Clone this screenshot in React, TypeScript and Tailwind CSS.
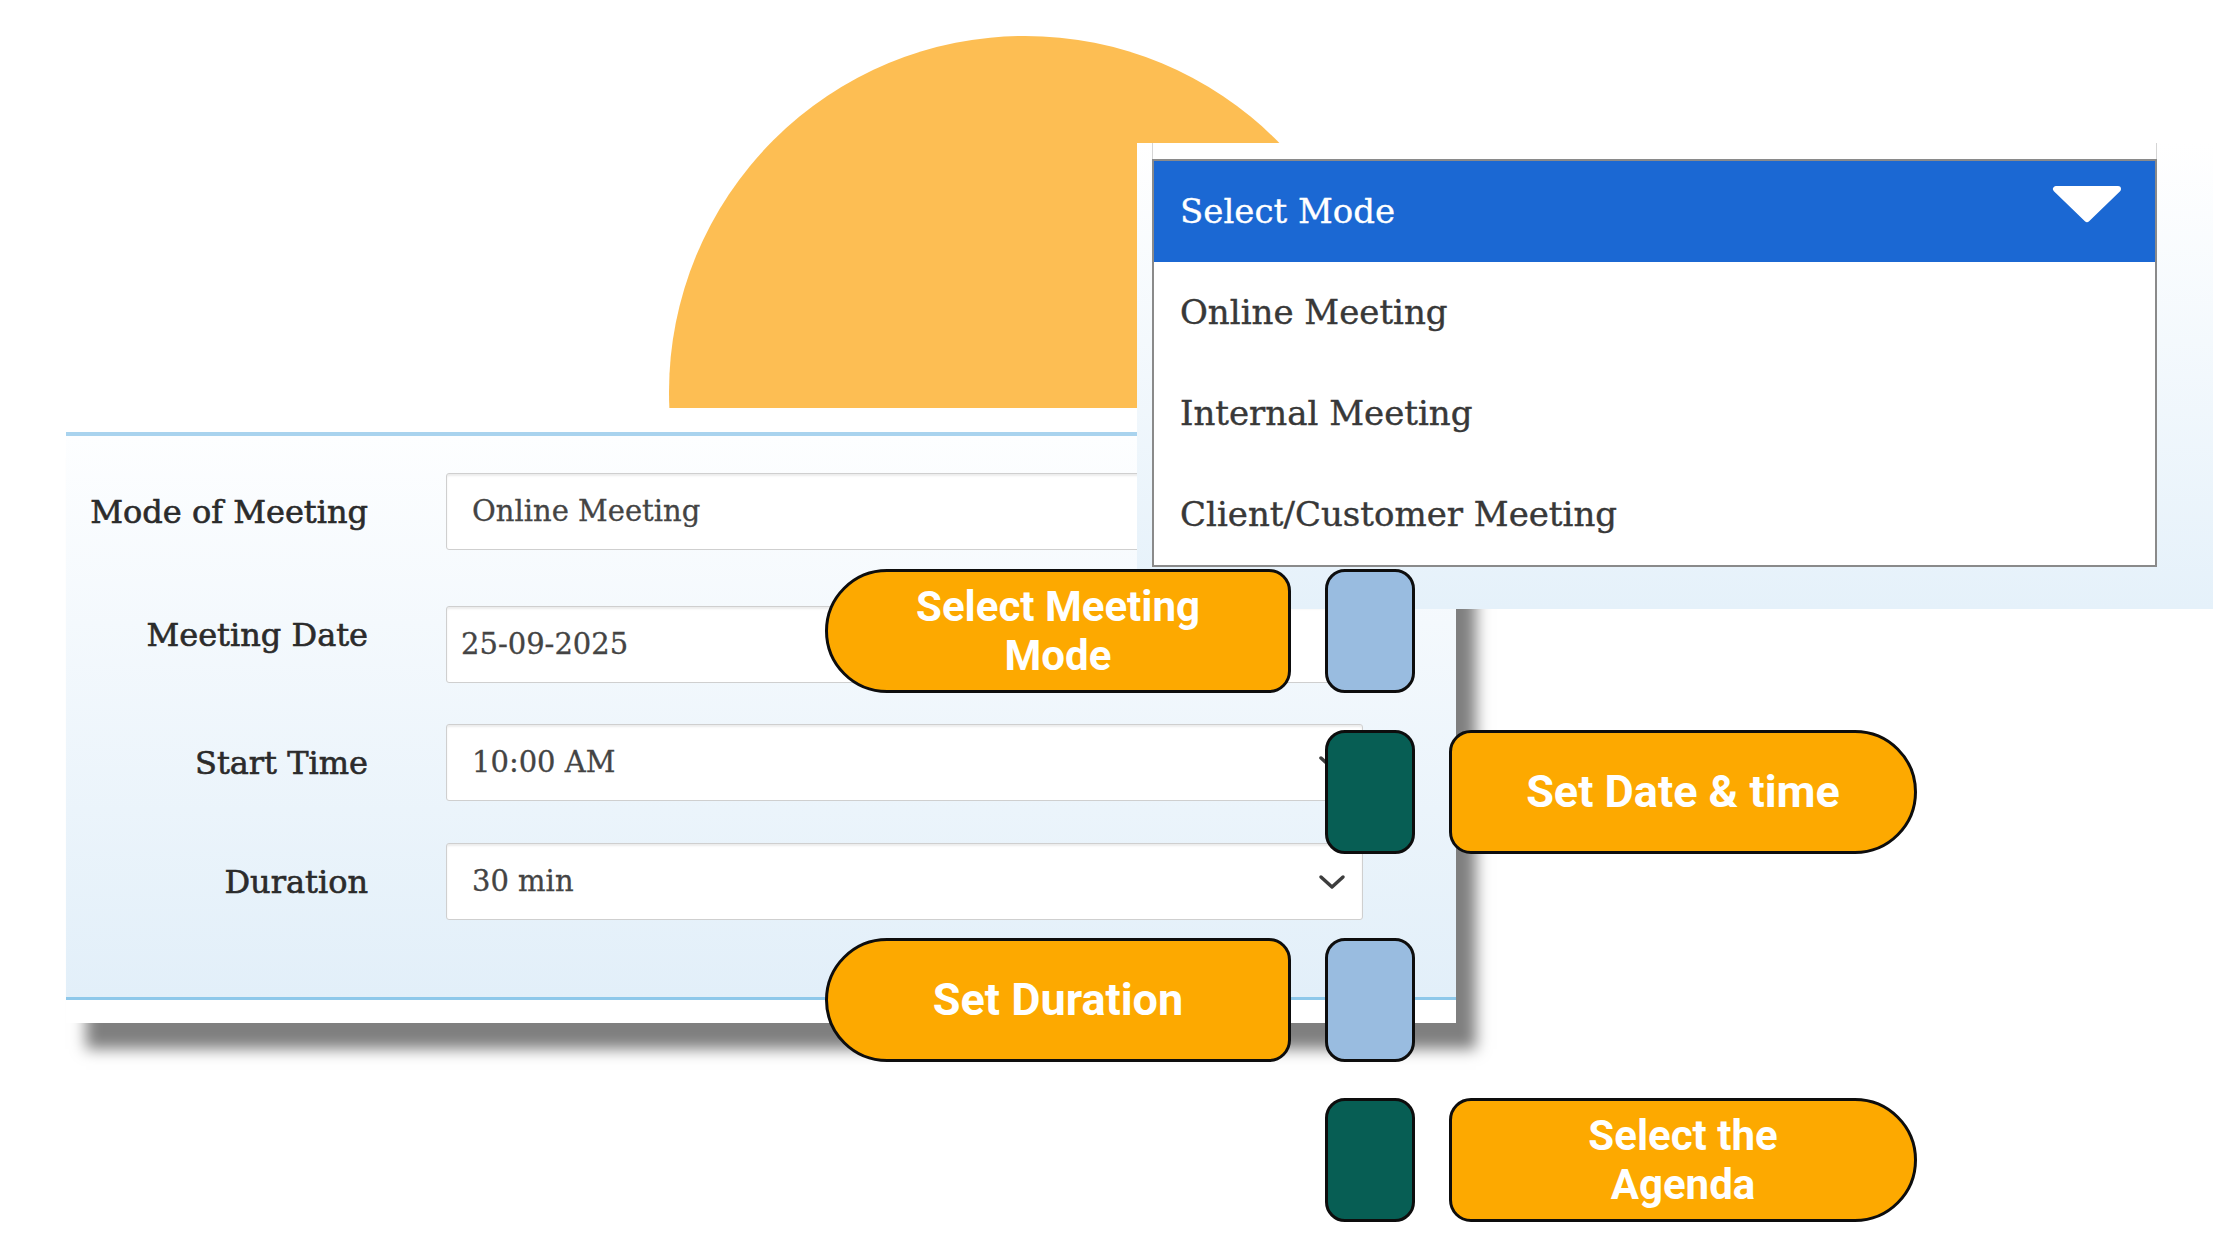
import React from "react"

const serif = "font-['DejaVu_Serif',serif]"
const sans = "font-['Roboto','Liberation_Sans',sans-serif]"

const fields = [
  { label: "Mode of Meeting", value: "Online Meeting", pad: "pl-[25px]", gap: "", labelShift: "", chevron: false },
  { label: "Meeting Date", value: "25-09-2025", pad: "pl-[14px]", gap: "mt-[56px]", labelShift: "-translate-y-[10px]", chevron: false },
  { label: "Start Time", value: "10:00 AM", pad: "pl-[25px]", gap: "mt-[41px]", labelShift: "", chevron: true },
  { label: "Duration", value: "30 min", pad: "pl-[25px]", gap: "mt-[42px]", labelShift: "", chevron: true },
]

const modes = ["Online Meeting", "Internal Meeting", "Client/Customer Meeting"]

const Chevron = () => (
  <svg width="28" height="16" viewBox="0 0 28 16" className="shrink-0">
    <polyline points="3,3 14,13 25,3" fill="none" stroke="#3d3d3d" strokeWidth="3.5" strokeLinecap="round" strokeLinejoin="round" />
  </svg>
)

const Square = ({ dark }: { dark?: boolean }) => (
  <div
    className={`h-[124px] w-[90px] shrink-0 rounded-[20px] border-[3px] border-[#0d0d0d] ${
      dark ? "bg-[#075e54]" : "bg-[#99bce0]"
    }`}
  />
)

const Pill = ({ side, lines }: { side: "left" | "right"; lines: string[] }) => (
  <div
    className={`flex h-[124px] shrink-0 flex-col items-center justify-center border-[3px] border-[#0d0d0d] bg-[#fda900] text-center font-bold text-white ${sans} ${
      lines.length > 1 ? "text-[42px] leading-[49px]" : "text-[45px] leading-[52px]"
    } ${side === "left" ? "w-[466px] rounded-l-[62px] rounded-r-[22px]" : "w-[468px] rounded-l-[22px] rounded-r-[62px]"}`}
  >
    {lines.map((l) => (
      <span key={l}>{l}</span>
    ))}
  </div>
)

const Spacer = () => <div className="w-[466px] shrink-0" />

const App = () => {
  return (
    <div className="relative h-[1260px] w-[2240px] overflow-hidden bg-white">
      {/* half sun */}
      <div className="absolute left-[669px] top-[36px] h-[372px] w-[712px] overflow-hidden">
        <div className="h-[712px] w-[712px] rounded-full bg-[#fdbe53]" />
      </div>

      {/* meeting form */}
      <div className="pl-[66px] pt-[432px]">
        <div className="w-[1390px] bg-white shadow-[20px_26px_14px_rgba(0,0,0,0.5)]">
          <div className="border-b-[3px] border-t-4 border-b-[#8ec8ea] border-t-[#a9d3ee] bg-linear-to-b from-[#fdfeff] to-[#e2eff9] pb-[77px] pt-[37px]">
            {fields.map((f) => (
              <div key={f.label} className={`flex items-center ${f.gap}`}>
                <div
                  className={`w-[302px] text-right text-[32px] text-[#2b2b2b] [-webkit-text-stroke:0.6px_#2b2b2b] ${serif} ${f.labelShift}`}
                >
                  {f.label}
                </div>
                <div
                  className={`ml-[78px] flex h-[77px] w-[917px] items-center justify-between rounded-[3px] border border-[#cfcfcf] bg-white pr-[16px] shadow-[inset_0_2px_2px_rgba(0,0,0,0.08)] ${f.pad}`}
                >
                  <span className={`text-[29px] text-[#444] [-webkit-text-stroke:0.3px_#444] ${serif}`}>{f.value}</span>
                  {f.chevron && <Chevron />}
                </div>
              </div>
            ))}
          </div>
          <div className="h-[23px] bg-white" />
        </div>
      </div>

      {/* open select */}
      <div className="absolute left-[1137px] top-[143px] h-[466px] w-[1076px] bg-linear-to-b from-white to-[#e5f1fa] pl-[15px]">
        <div className="w-[1005px]">
          <div className="h-[16px] border-x border-[#d5d5d5] bg-white" />
          <div className={`border-2 border-[#8a8a8a] bg-white ${serif}`}>
            <div className="flex h-[101px] items-center justify-between bg-[#1b68d3] pl-[26px] pr-[33px]">
              <span className="text-[34px] text-white [-webkit-text-stroke:0.3px_#fff]">Select Mode</span>
              <svg width="70" height="38" viewBox="0 0 70 38" className="-translate-y-[8px]">
                <polygon points="4,4 66,4 35,34" fill="white" stroke="white" strokeWidth="6" strokeLinejoin="round" />
              </svg>
            </div>
            {modes.map((m) => (
              <div
                key={m}
                className="flex h-[101px] items-center pl-[26px] text-[34px] text-[#383838] [-webkit-text-stroke:0.4px_#383838]"
              >
                {m}
              </div>
            ))}
          </div>
        </div>
      </div>

      {/* step callouts */}
      <div className="absolute left-[825px] top-[569px] flex flex-col">
        <div className="flex gap-[34px]">
          <Pill side="left" lines={["Select Meeting", "Mode"]} />
          <Square />
        </div>
        <div className="mt-[37px] flex gap-[34px]">
          <Spacer />
          <Square dark />
          <Pill side="right" lines={["Set Date & time"]} />
        </div>
        <div className="mt-[84px] flex gap-[34px]">
          <Pill side="left" lines={["Set Duration"]} />
          <Square />
        </div>
        <div className="mt-[36px] flex gap-[34px]">
          <Spacer />
          <Square dark />
          <Pill side="right" lines={["Select the", "Agenda"]} />
        </div>
      </div>
    </div>
  )
}

export default App
